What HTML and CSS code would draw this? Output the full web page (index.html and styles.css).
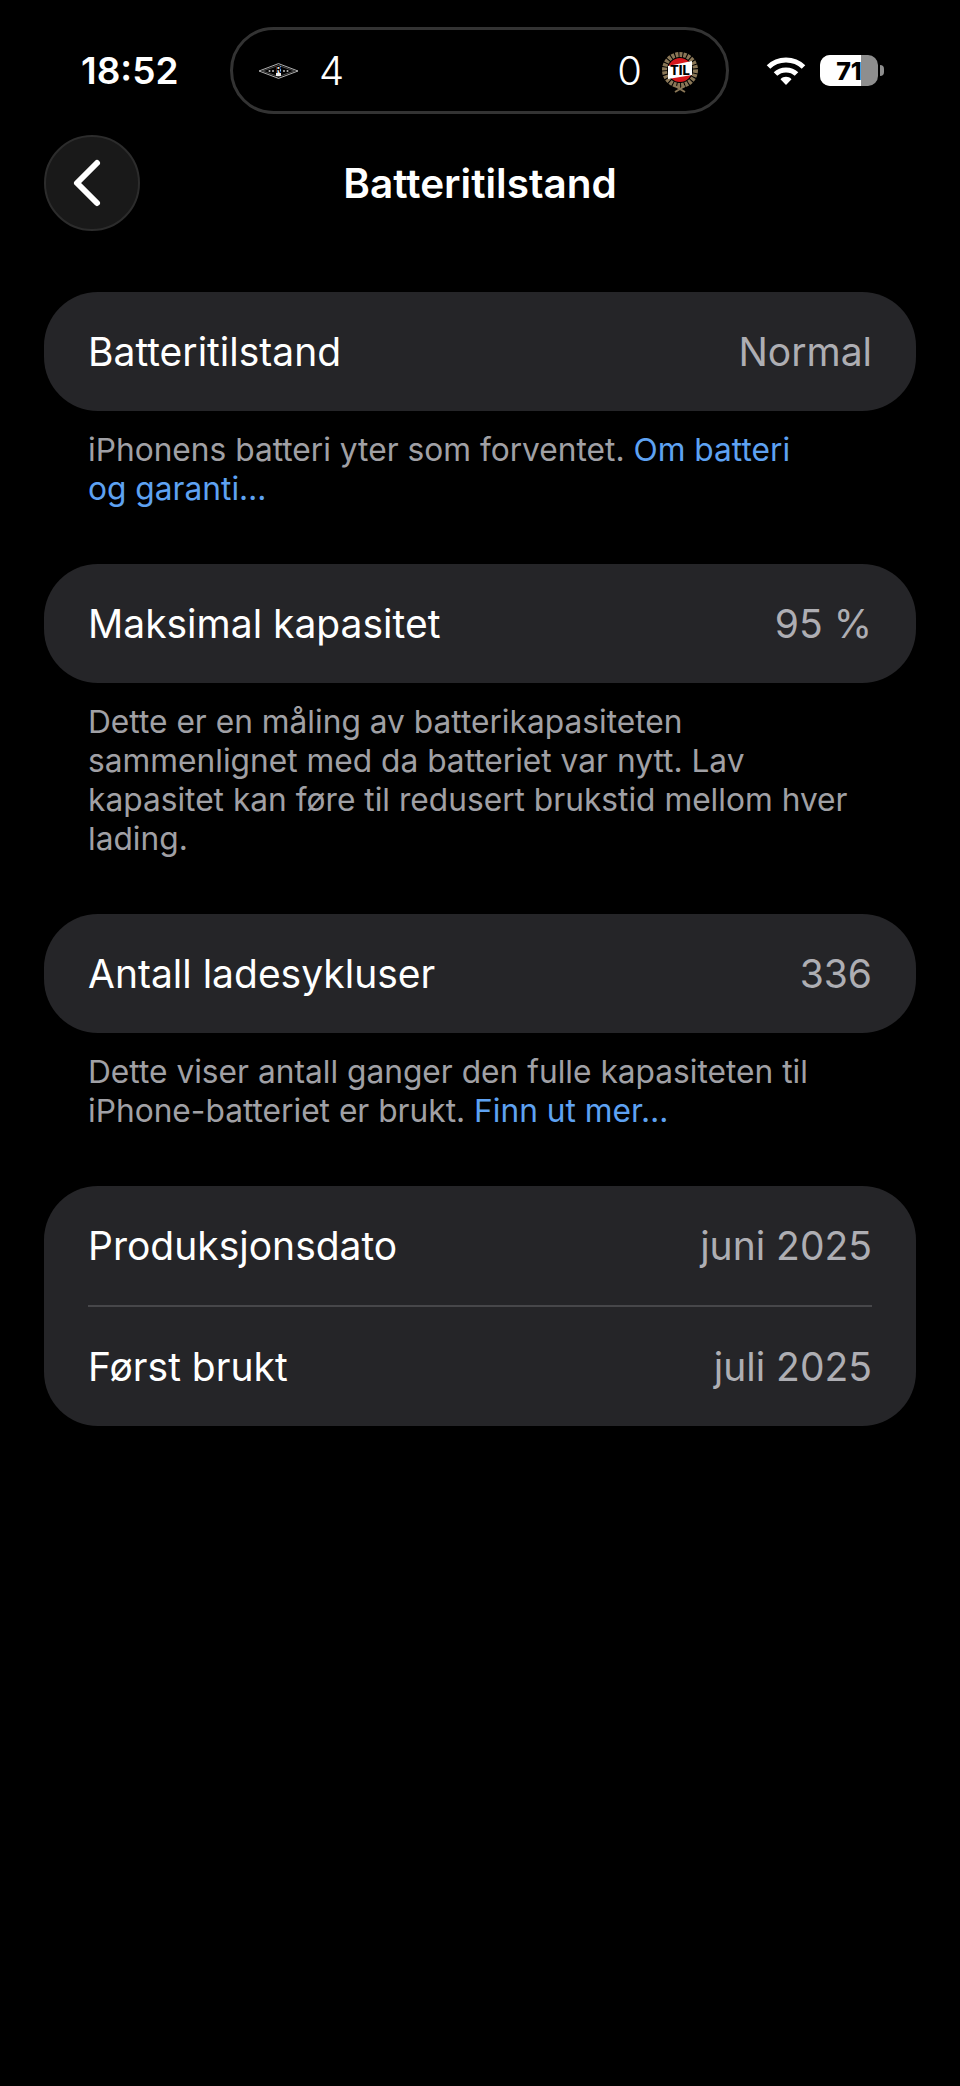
FILE: index.html
```html
<!DOCTYPE html>
<html lang="en">
<head>
    <meta charset="UTF-8">
    <meta name="viewport" content="width=device-width, initial-scale=1.0">
    <title>Batteritilstand</title>
    <link rel="stylesheet" href="styles.css">
</head>
<body>
    <div class="status-bar">
        <span class="clock">18:52</span>
        <div class="score-pill">
            <div class="score-side">
                <svg class="logo-rbk" viewBox="0 0 40 16" aria-hidden="true">
                    <polygon points="0.5,8 20,0.6 39.5,8 20,15.4" fill="#000" stroke="#ddd" stroke-width="0.8"/>
                    <polygon points="4,8 20,2.4 36,8 20,13.6" fill="none" stroke="#999" stroke-width="0.5"/>
                    <rect x="17.500" y="3" width="5" height="10" fill="#eee"/>
                    <text x="20" y="10.400" class="logo-rbk-text">R</text>
                    <circle cx="11" cy="8" r="1" fill="#bbb"/>
                    <circle cx="14.500" cy="8" r="1" fill="#bbb"/>
                    <circle cx="25.500" cy="8" r="1" fill="#bbb"/>
                    <circle cx="29" cy="8" r="1" fill="#bbb"/>
                </svg>
                <span class="score">4</span>
            </div>
            <div class="score-side">
                <span class="score">0</span>
                <svg class="logo-til" viewBox="0 0 36 42" aria-hidden="true">
                    <circle cx="18" cy="19" r="15.500" fill="none" stroke="#8a7757" stroke-width="5" stroke-dasharray="3 1"/>
                    <circle cx="18" cy="19" r="12" fill="#d5181c"/>
                    <path d="M13 35 L23 41 M23 35 L13 41" stroke="#8a7757" stroke-width="2"/>
                    <polygon points="6,15 30,10 30,24 6,28" fill="#fff"/>
                    <text x="18" y="24" class="logo-til-text">TIL</text>
                </svg>
            </div>
        </div>
        <div class="status-icons">
            <svg class="wifi" viewBox="0 0 40 30" aria-hidden="true">
                <path d="M2.500 11 C12 1.500 28 1.500 37.500 11" class="wifi-arc"/>
                <path d="M9.500 18 C15 12.500 25 12.500 30.500 18" class="wifi-arc"/>
                <path d="M14.500 23.200 C17.500 20 22.500 20 25.500 23.200 L20 29 Z" fill="#fff"/>
            </svg>
            <div class="battery">
                <div class="battery-body">
                    <div class="battery-fill"></div>
                    <span class="battery-level">71</span>
                </div>
                <div class="battery-cap"></div>
            </div>
        </div>
    </div>

    <header class="nav">
        <button class="back-btn" aria-label="Tilbake">
            <svg viewBox="0 0 30 50" aria-hidden="true">
                <path d="M25 5 L5 25 L25 45" fill="none" stroke="#fff" stroke-width="6" stroke-linecap="round" stroke-linejoin="round"/>
            </svg>
        </button>
        <h1 class="nav-title">Batteritilstand</h1>
    </header>

    <main class="content">
        <section class="group">
            <div class="card">
                <div class="row"><span>Batteritilstand</span><span class="value">Normal</span></div>
            </div>
            <p class="note">iPhonens batteri yter som forventet. <a href="#">Om batteri<br>og garanti…</a></p>
        </section>

        <section class="group">
            <div class="card">
                <div class="row"><span>Maksimal kapasitet</span><span class="value">95 %</span></div>
            </div>
            <p class="note">Dette er en måling av batterikapasiteten<br>sammenlignet med da batteriet var nytt. Lav<br>kapasitet kan føre til redusert brukstid mellom hver<br>lading.</p>
        </section>

        <section class="group">
            <div class="card">
                <div class="row"><span>Antall ladesykluser</span><span class="value">336</span></div>
            </div>
            <p class="note">Dette viser antall ganger den fulle kapasiteten til<br>iPhone-batteriet er brukt. <a href="#">Finn ut mer…</a></p>
        </section>

        <section class="group">
            <div class="card">
                <div class="row"><span>Produksjonsdato</span><span class="value">juni 2025</span></div>
                <div class="divider"></div>
                <div class="row"><span>Først brukt</span><span class="value">juli 2025</span></div>
            </div>
        </section>
    </main>
</body>
</html>
```

FILE: styles.css
```css
* {
    box-sizing: border-box;
}
body {
    margin: 0;
    height: 2086px;
    padding-top: 27px;
    background: #000;
    color: #fff;
    font-family: Inter, "Liberation Sans", sans-serif;
    overflow: hidden;
}

/* status bar */
.status-bar {
    display: flex;
    align-items: center;
    height: 87px;
    padding-left: 81px;
}
.clock {
    width: 149px;
    font-size: 37px;
    font-weight: 600;
}
.score-pill {
    display: flex;
    justify-content: space-between;
    align-items: center;
    width: 499px;
    height: 87px;
    padding: 0 28px 0 25px;
    border: 3px solid #333;
    border-radius: 44px;
}
.score-side {
    display: flex;
    align-items: center;
    gap: 20px;
}
.score {
    font-size: 40px;
    font-weight: 300;
}
.logo-rbk {
    width: 41px;
    height: 16px;
}
.logo-rbk-text {
    font-size: 9px;
    font-weight: 700;
    text-anchor: middle;
    fill: #000;
}
.logo-til {
    width: 36px;
    height: 42px;
    margin-top: 2px;
}
.logo-til-text {
    font-size: 13px;
    font-weight: 800;
    text-anchor: middle;
    fill: #000;
}
.status-icons {
    display: flex;
    align-items: center;
    gap: 14px;
    margin-left: 37px;
}
.wifi {
    width: 40px;
    height: 30px;
}
.wifi-arc {
    fill: none;
    stroke: #fff;
    stroke-width: 5;
}
.battery {
    display: flex;
    align-items: center;
    gap: 2px;
}
.battery-body {
    position: relative;
    display: flex;
    justify-content: center;
    align-items: center;
    width: 58px;
    height: 31px;
    border-radius: 10px;
    background: #8e8e8e;
    overflow: hidden;
}
.battery-fill {
    position: absolute;
    left: 0;
    top: 0;
    bottom: 0;
    width: 71%;
    background: #fff;
}
.battery-level {
    position: relative;
    font-size: 25px;
    font-weight: 800;
    color: #000;
}
.battery-cap {
    width: 4px;
    height: 11px;
    border-radius: 0 6px 6px 0;
    background: #8e8e8e;
}

/* nav */
.nav {
    position: relative;
    display: flex;
    justify-content: center;
    align-items: center;
    height: 96px;
    margin-top: 21px;
}
.back-btn {
    position: absolute;
    left: 44px;
    top: 0;
    display: flex;
    justify-content: center;
    align-items: center;
    width: 96px;
    height: 96px;
    padding: 0 10px 0 0;
    border: 2px solid #2c2c2c;
    border-radius: 50%;
    background: #191919;
}
.back-btn svg {
    width: 30px;
    height: 50px;
}
.nav-title {
    margin: 0;
    font-size: 40.500px;
    font-weight: 600;
}

/* list */
.content {
    display: flex;
    flex-direction: column;
    gap: 56px;
    margin-top: 61px;
    padding: 0 44px;
}
.card {
    border-radius: 54px;
    background: #252528;
}
.row {
    display: flex;
    justify-content: space-between;
    align-items: center;
    height: 119px;
    padding: 0 44px;
    font-size: 39px;
}
.value {
    color: #aeaeb3;
}
.divider {
    height: 2px;
    margin: 0 44px;
    background: #47474a;
}
.note {
    margin: 19px 0 0;
    padding: 0 44px;
    font-size: 31.700px;
    line-height: 39px;
    color: #a0a0a5;
}
.note a {
    color: #5ea2f2;
    text-decoration: none;
}
```
